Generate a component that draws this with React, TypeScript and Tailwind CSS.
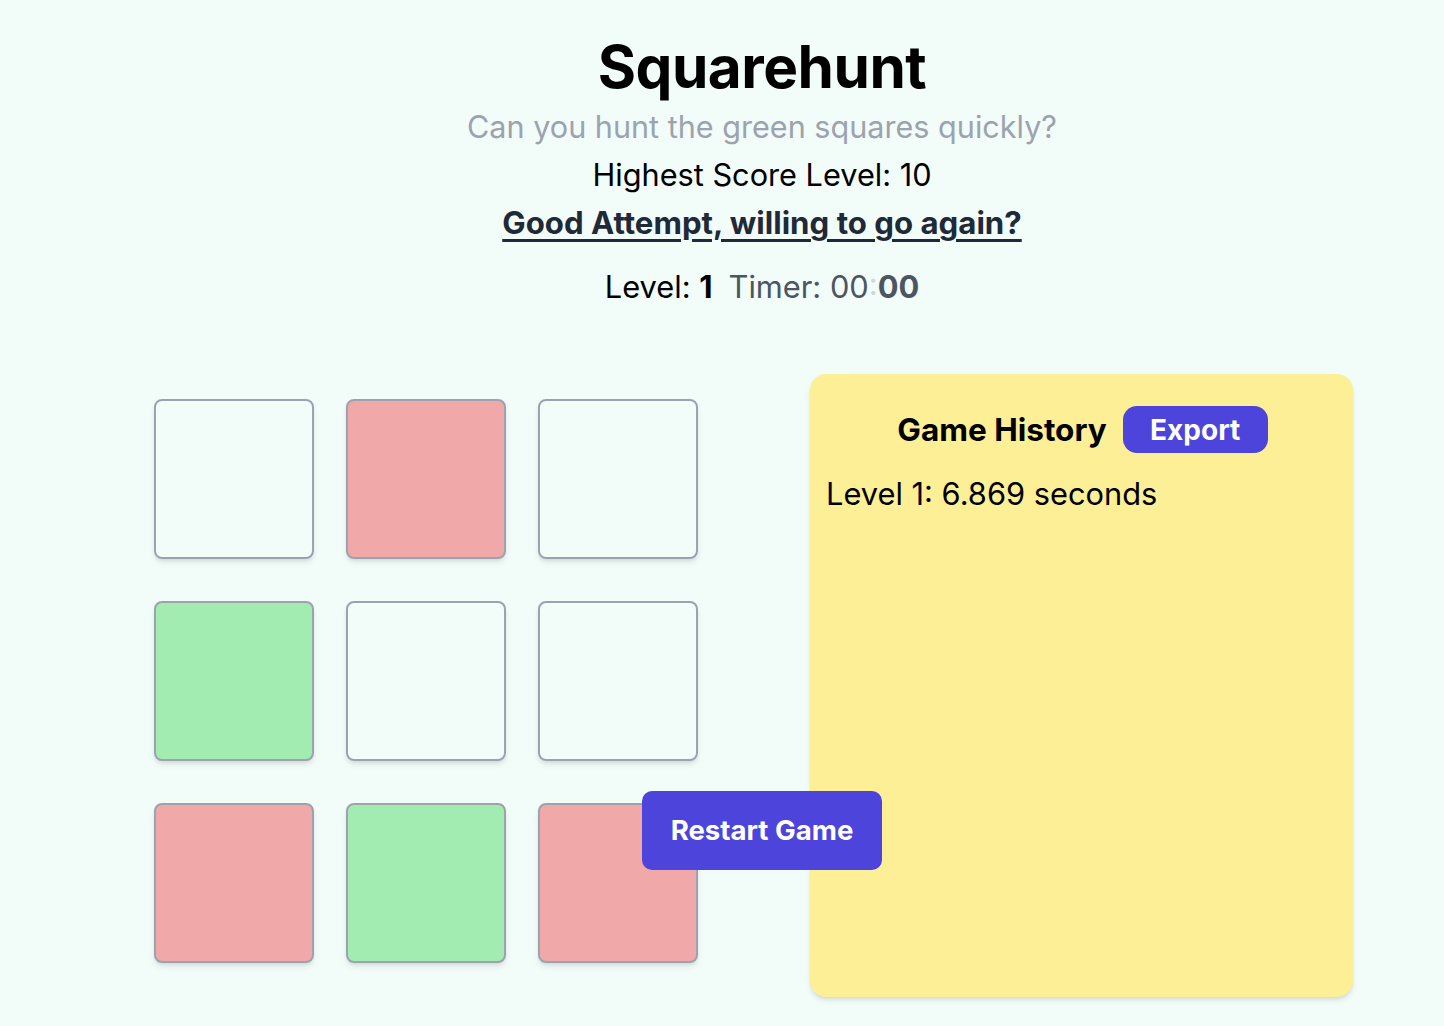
const cells = ['white', 'red', 'white', 'green', 'white', 'white', 'red', 'green', 'red'];

const cellColor: Record<string, string> = {
  white: 'bg-transparent',
  red: 'bg-[#f0a8a8]',
  green: 'bg-[#a2ecb2]',
};

export default function App() {
  return (
    <div className="min-h-[1026px] w-full bg-[#f2fcf9] text-black" style={{ fontFamily: 'Inter, "Noto Sans", sans-serif' }}>
      <div className="flex flex-col items-center pl-[80px] pt-[37px] text-center">
        <h1 className="text-[58.5px] font-bold leading-[60px] tracking-[-0.5px]">Squarehunt</h1>
        <p className="mt-[6px] text-[30.6px] leading-[48px] text-[#9ca3af]">Can you hunt the green squares quickly?</p>
        <p className="text-[30.7px] leading-[48px]">Highest Score Level: 10</p>
        <a className="text-[31.2px] font-bold leading-[48px] text-[#1f2937] underline underline-offset-[5px]" href="#">
          Good Attempt, willing to go again?
        </a>
        <div className="mt-[16px] flex items-center gap-[16px] text-[30.8px] leading-[48px]">
          <span>
            Level: <span className="font-bold">1</span>
          </span>
          <span className="text-[#4b5563]">
            Timer: 00<span className="text-[#d1d5db]">:</span>
            <span className="font-bold">00</span>
          </span>
        </div>
      </div>

      <div className="mt-[63px] flex items-start pl-[154px]">
        <div className="relative mt-[25px] grid w-[544px] grid-cols-3 gap-x-[32px] gap-y-[42px]">
          {cells.map((c, i) => (
            <div key={i} className={`h-[160px] w-[160px] rounded-[8px] border-2 border-[#9ca3af] shadow-md ${cellColor[c]}`} />
          ))}
          <button className="absolute left-[488px] top-[392px] h-[79px] w-[240px] rounded-[10px] bg-[#4c44db] text-[27.6px] font-bold text-white">
            Restart Game
          </button>
        </div>

        <div className="ml-[112px] h-[623px] w-[543px] rounded-[16px] bg-[#fdef95] px-[16px] pt-[32px] shadow-md">
          <div className="flex items-center justify-center gap-[16px] pl-[2px]">
            <h2 className="text-[31.5px] font-bold">Game History</h2>
            <button className="h-[47px] w-[145px] rounded-[14px] bg-[#4c44db] text-[28px] font-bold text-white">Export</button>
          </div>
          <p className="mt-[17px] text-[30.8px] leading-[48px]">Level 1: 6.869 seconds</p>
        </div>
      </div>
    </div>
  );
}
